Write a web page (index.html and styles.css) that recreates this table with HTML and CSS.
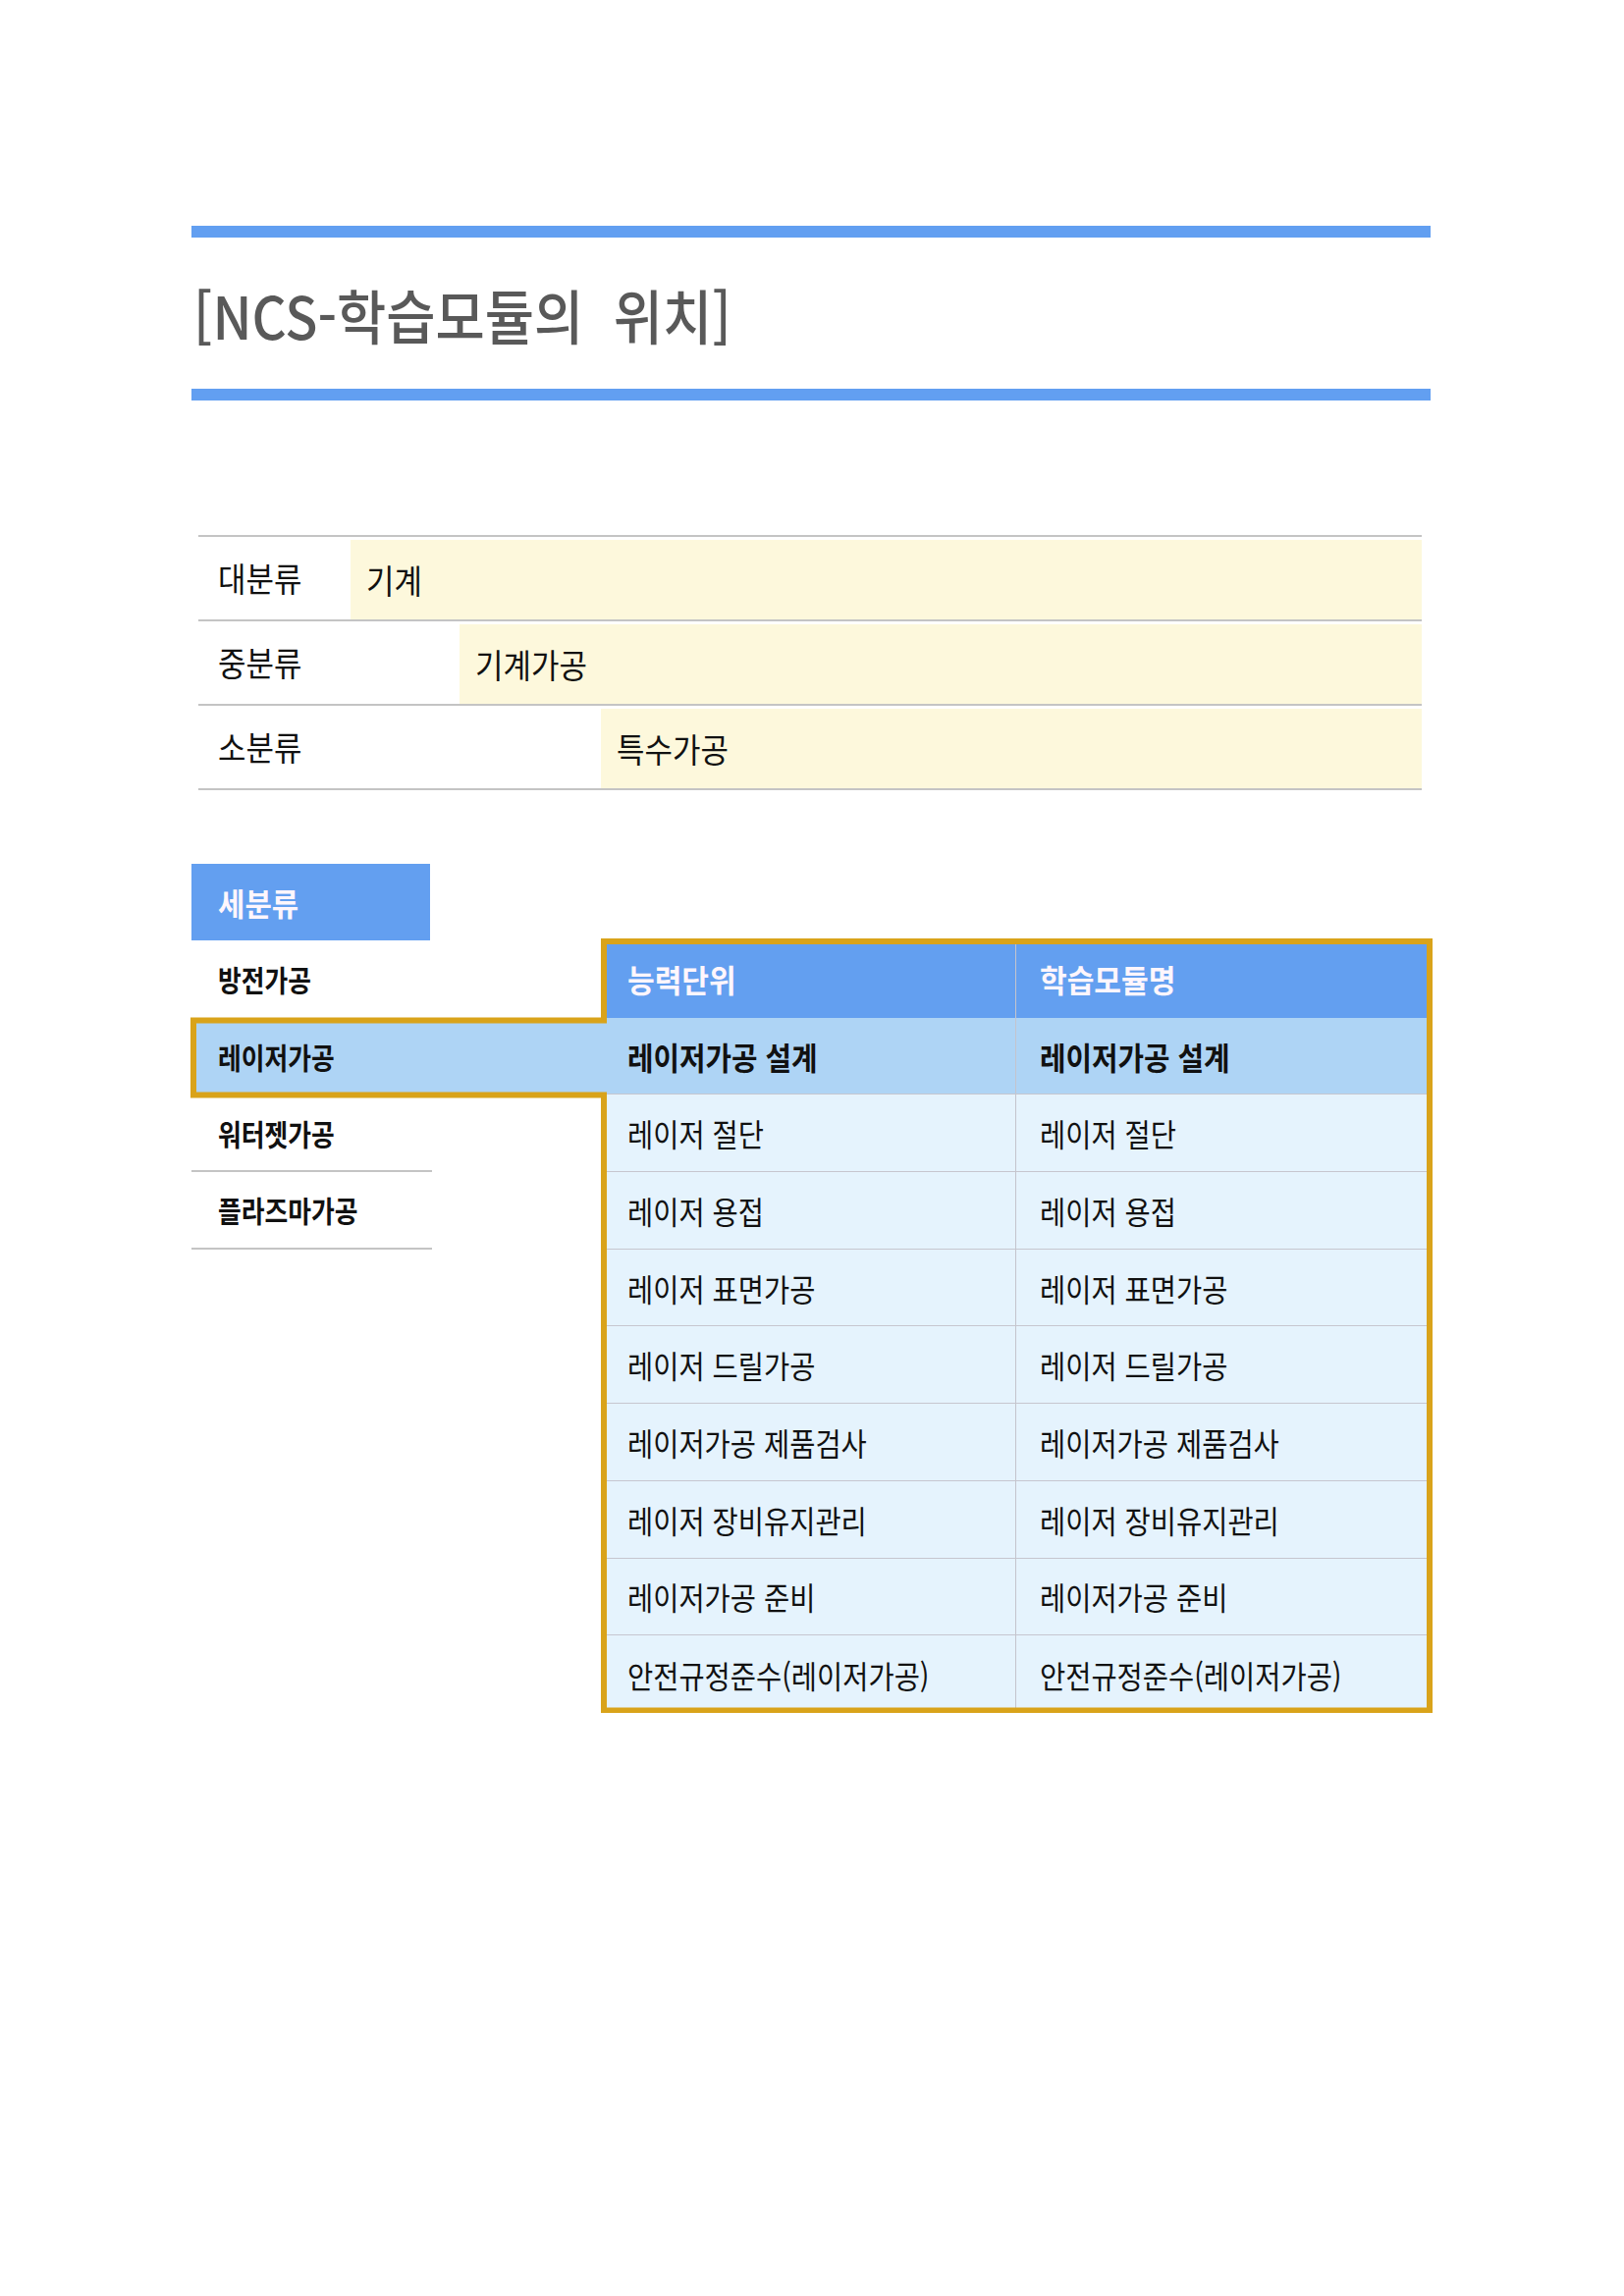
FILE: index.html
```html
<!DOCTYPE html>
<html lang="ko">
<head>
<meta charset="utf-8">
<title>NCS-학습모듈의 위치</title>
<link rel="stylesheet" href="styles.css">
</head>
<body>
<div class="page">
  <div class="rule"></div>
  <h1 class="title"><span class="sx">[NCS-학습모듈의&nbsp; 위치]</span></h1>
  <div class="rule"></div>

  <div class="ctable">
    <div class="crow">
      <div class="clabel w1"><span class="sx">대분류</span></div>
      <div class="cval"><span class="sx">기계</span></div>
    </div>
    <div class="crow">
      <div class="clabel w2"><span class="sx">중분류</span></div>
      <div class="cval"><span class="sx">기계가공</span></div>
    </div>
    <div class="crow">
      <div class="clabel w3"><span class="sx">소분류</span></div>
      <div class="cval"><span class="sx">특수가공</span></div>
    </div>
  </div>

  <div class="map">
    <div class="sub-head"><span class="sx">세분류</span></div>
    <div class="item r2"><span class="sx">방전가공</span></div>
    <div class="item bridge"><span class="sx">레이저가공</span></div>
    <div class="item r4 lined"><span class="sx">워터젯가공</span></div>
    <div class="item r5 lined"><span class="sx">플라즈마가공</span></div>

    <div class="units">
      <div class="cell head first"><span class="sx">능력단위</span></div>
      <div class="cell head"><span class="sx">학습모듈명</span></div>
      <div class="cell sel first"><span class="sx">레이저가공 설계</span></div>
      <div class="cell sel"><span class="sx">레이저가공 설계</span></div>
      <div class="cell first"><span class="sx">레이저 절단</span></div>
      <div class="cell"><span class="sx">레이저 절단</span></div>
      <div class="cell first"><span class="sx">레이저 용접</span></div>
      <div class="cell"><span class="sx">레이저 용접</span></div>
      <div class="cell first"><span class="sx">레이저 표면가공</span></div>
      <div class="cell"><span class="sx">레이저 표면가공</span></div>
      <div class="cell first"><span class="sx">레이저 드릴가공</span></div>
      <div class="cell"><span class="sx">레이저 드릴가공</span></div>
      <div class="cell first"><span class="sx">레이저가공 제품검사</span></div>
      <div class="cell"><span class="sx">레이저가공 제품검사</span></div>
      <div class="cell first"><span class="sx">레이저 장비유지관리</span></div>
      <div class="cell"><span class="sx">레이저 장비유지관리</span></div>
      <div class="cell first"><span class="sx">레이저가공 준비</span></div>
      <div class="cell"><span class="sx">레이저가공 준비</span></div>
      <div class="cell first last"><span class="sx">안전규정준수(레이저가공)</span></div>
      <div class="cell last"><span class="sx">안전규정준수(레이저가공)</span></div>
    </div>

    <svg class="outline" width="1264" height="866" viewBox="0 0 1264 866" aria-hidden="true">
      <path d="M2 159.5 H420 V79 H1261 V862.5 H420 V235.5 H2 Z" fill="none" stroke="#d9a31a" stroke-width="6" stroke-linejoin="miter"/>
    </svg>
  </div>
</div>
</body>
</html>
```

FILE: styles.css
```css
* { box-sizing: border-box; }

body {
  margin: 0;
  background: #ffffff;
  font-family: "Noto Sans CJK KR", "Noto Sans", sans-serif;
  color: #111111;
}

.page {
  padding: 230px 0 0 195px;
  width: 1654px;
}

.sx {
  display: inline-block;
  white-space: nowrap;
  transform: scaleX(0.89);
  transform-origin: 0 50%;
}

.rule {
  width: 1262px;
  height: 12px;
  background: #629ff1;
}

.title {
  margin: 48px 0 46px 2px;
  height: 60px;
  font-size: 60px;
  line-height: 60px;
  font-weight: 500;
  color: #595959;
}

.title .sx { transform: scaleX(0.91); }

/* classification table */
.ctable {
  margin: 137px 0 0 7px;
  width: 1246px;
  border-top: 2px solid #c4c4c4;
}

.crow {
  display: flex;
  height: 86px;
  border-bottom: 2px solid #c4c4c4;
}

.clabel {
  display: flex;
  align-items: center;
  padding-left: 20px;
  font-size: 34px;
  line-height: 1;
}

.clabel .sx, .cval .sx { transform: scaleX(0.91); }

.w1 { width: 155px; }
.w2 { width: 266px; }
.w3 { width: 410px; }

.cval {
  flex: 1;
  display: flex;
  align-items: center;
  margin-top: 3px;
  padding-left: 16px;
  background: #fdf8dc;
  font-size: 34px;
  line-height: 1;
}

/* module map */
.map {
  position: relative;
  margin-top: 75px;
  display: grid;
  grid-template-columns: 243px 174px 423px 424px;
  grid-template-rows: 78px repeat(10, 78.7px);
  width: 1264px;
}

.sub-head {
  grid-column: 1;
  grid-row: 1;
  display: flex;
  align-items: center;
  padding-left: 27px;
  background: #639ff0;
  color: #fff6fc;
  font-size: 32px;
  font-weight: 700;
  line-height: 1;
}

.sub-head .sx { transform: scaleX(0.93); }

.item {
  grid-column: 1;
  display: flex;
  align-items: center;
  padding-left: 27px;
  font-size: 30px;
  font-weight: 700;
  line-height: 1;
}

.item .sx { transform: scaleX(0.86); }

.r2 { grid-row: 2; }
.r4 { grid-row: 4; }
.r5 { grid-row: 5; }

.bridge {
  grid-column: 1 / 3;
  grid-row: 3;
  background: #aed4f5;
}

.lined {
  width: 245px;
  border-bottom: 2px solid #c4c4c4;
}

.units {
  grid-column: 3 / 5;
  grid-row: 2 / 12;
  display: grid;
  grid-template-columns: 423px 1fr;
  grid-auto-rows: 1fr;
}

.cell {
  display: flex;
  align-items: center;
  padding-left: 24px;
  background: #e5f3fd;
  border-bottom: 1px solid #c6c6cf;
  font-size: 32px;
  line-height: 1;
}

.cell.first {
  padding-left: 27px;
  border-right: 1px solid #c4c4cc;
}

.cell.head {
  background: #639ff0;
  color: #fff6fc;
  font-weight: 700;
  border-bottom: none;
}

.cell.head .sx { transform: scaleX(0.94); }

.cell.sel {
  background: #aed4f5;
  font-weight: 700;
}

.cell.sel .sx { transform: scaleX(0.9); }

.cell.last { border-bottom: none; }

.outline {
  position: absolute;
  left: 0;
  top: 0;
  overflow: visible;
  pointer-events: none;
}
```
